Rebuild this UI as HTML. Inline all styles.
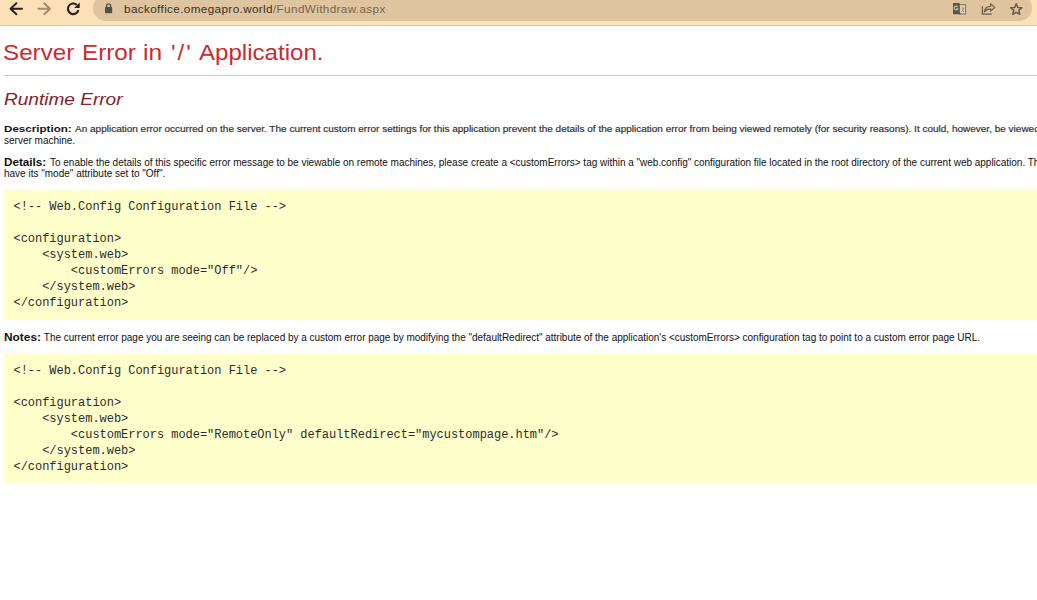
<!DOCTYPE html>
<html><head><meta charset="utf-8">
<style>
html,body{margin:0;padding:0;width:1037px;height:600px;overflow:hidden;background:#fff;}
body{position:relative;font-family:"Liberation Sans",sans-serif;}
.tb{position:absolute;left:0;top:0;width:1037px;height:25px;background:#fce0b8;border-bottom:1px solid #d6c4ad;overflow:hidden;}
.omni{position:absolute;left:93px;top:-5.5px;width:939px;height:26px;border-radius:13px;background:#dfc4a0;}
.url{position:absolute;left:124px;top:2px;font-size:11.7px;letter-spacing:0.38px;color:#76644f;white-space:nowrap;}
.url b{font-weight:normal;color:#3a2f24;}
.ic{position:absolute;}
.l{position:absolute;white-space:nowrap;}
h1{position:absolute;margin:0;left:0;top:39.5px;width:400px;height:30px;font-weight:normal;font-size:22px;color:#cb2a30;white-space:nowrap;}
h1 span{position:absolute;top:0;transform-origin:0 0;}
.hr{position:absolute;left:4px;top:75px;width:1033px;height:1px;background:#c8c8c8;}
h2{position:absolute;margin:0;left:4px;top:91px;font-weight:normal;font-style:italic;font-size:16px;color:#84202a;white-space:nowrap;transform:scaleX(1.19);transform-origin:0 0;}
.t{position:absolute;left:4px;font-size:10px;color:#111;white-space:nowrap;}
.lb{font-weight:bold;transform:scaleX(1.14);transform-origin:0 0;color:#111;}
.d1{-webkit-text-stroke:0.2px #3a3a3a;color:#2a2a2a;}
.dsc{transform:scaleY(0.85);transform-origin:0 9px;}
.box{position:absolute;left:4px;width:1033px;height:131px;background:#ffffcc;}
pre{position:absolute;left:9.5px;top:10px;margin:0;font-family:"Liberation Mono",monospace;font-size:12px;line-height:16px;letter-spacing:-0.03px;color:#2c2c2c;}
</style></head><body>
<div class="tb">
  <div class="omni"></div>
  <svg class="ic" style="left:0;top:0" width="1037" height="25" viewBox="0 0 1037 25">
    <g fill="none" stroke-linecap="round" stroke-linejoin="round">
      <path d="M22 8.7H10.5M16.4 3.2L10.5 8.7L16.4 14.3" stroke="#2a1f14" stroke-width="1.9"/>
      <path d="M38.5 8.7H50M44.3 3.2L50 8.7L44.3 14.3" stroke="#a58a6c" stroke-width="1.9"/>
      <path d="M78.4 10A5.3 5.3 0 1 1 76.8 4.9" stroke="#2a1f14" stroke-width="2.1" stroke-linecap="butt"/>
    </g>
    <path d="M74.2 7.9H79.7V2.4Z" fill="#2a1f14"/>
    <!-- lock -->
    <rect x="105" y="7" width="7.2" height="6.2" rx="0.8" fill="#55504c"/>
    <path d="M106.6 7.6V5.9A2 2 0 0 1 110.6 5.9V7.6" fill="none" stroke="#55504c" stroke-width="1.4"/>
    <!-- translate -->
    <rect x="959.3" y="4.7" width="6.3" height="9.3" fill="#e4cfb3" stroke="#86735e" stroke-width="1"/>
    <path d="M953 3H959.6V12.6L961.2 14.3H953Z" fill="#5a564c"/>
    <path d="M957.6 6.9A1.9 1.9 0 1 0 957.8 8.9H956.3" fill="none" stroke="#cfc4b2" stroke-width="1.1"/>
    <path d="M961.5 8.2H964.1M963.6 8.2Q962.8 10.8 961.2 12M962.2 10L964.1 12" fill="none" stroke="#8f7a64" stroke-width="0.8"/>
    <!-- share -->
    <path d="M982.4 6.2V14.2H991.8" fill="none" stroke="#6e5c48" stroke-width="1.3"/>
    <path d="M984.4 11.8C984.8 8.4 987.2 6.4 990.6 6.3V3.8L994.8 7.4L990.6 11V8.8C987.8 8.8 985.9 9.8 984.4 11.8Z" fill="none" stroke="#6e5c48" stroke-width="1.2" stroke-linejoin="round"/>
    <!-- star -->
    <path d="M1016.30 3.70L1017.89 7.42L1021.91 7.78L1018.87 10.43L1019.77 14.37L1016.30 12.30L1012.83 14.37L1013.73 10.43L1010.69 7.78L1014.71 7.42Z" fill="none" stroke="#6a5a46" stroke-width="1.5" stroke-linejoin="round"/>
  </svg>
  <div class="url"><b>backoffice.omegapro.world</b>/FundWithdraw.aspx</div>
</div>
<h1><span style="left:3px;transform:scaleX(1.10)">Server</span><span style="left:82px;transform:scaleX(1.10)">Error</span><span style="left:143.4px;transform:scaleX(1.113)">in</span><span style="left:170.9px;transform:scaleX(1.1);letter-spacing:1.75px">'/'</span><span style="left:199.4px;transform:scaleX(1.095)">Application.</span></h1>
<div class="hr"></div>
<h2>Runtime Error</h2>
<div class="t lb" style="top:123px;transform:scale(1.16,0.85);transform-origin:0 9px">Description:</div>
<div class="t d1 dsc" style="top:123px;left:75px">An application error occurred on the server. The current custom error settings for this application prevent the details of the application error from being viewed remotely (for security reasons). It could, however, be viewed by browsers running on the local</div>
<div class="t" style="top:135px">server machine.</div>
<div class="t lb" style="top:157px;transform:scaleX(1.17)">Details:</div>
<div class="t" style="top:157px;left:50px;letter-spacing:-0.016px">To enable the details of this specific error message to be viewable on remote machines, please create a &lt;customErrors&gt; tag within a "web.config" configuration file located in the root directory of the current web application. This &lt;customErrors&gt; tag should then</div>
<div class="t" style="top:168px">have its "mode" attribute set to "Off".</div>
<div class="box" style="top:189px"><pre>&lt;!-- Web.Config Configuration File --&gt;

&lt;configuration&gt;
    &lt;system.web&gt;
        &lt;customErrors mode="Off"/&gt;
    &lt;/system.web&gt;
&lt;/configuration&gt;</pre></div>
<div class="t lb" style="top:332px;transform:scaleX(1.19)">Notes:</div>
<div class="t" style="top:332px;left:43.8px;letter-spacing:-0.018px">The current error page you are seeing can be replaced by a custom error page by modifying the "defaultRedirect" attribute of the application's &lt;customErrors&gt; configuration tag to point to a custom error page URL.</div>
<div class="box" style="top:353px"><pre>&lt;!-- Web.Config Configuration File --&gt;

&lt;configuration&gt;
    &lt;system.web&gt;
        &lt;customErrors mode="RemoteOnly" defaultRedirect="mycustompage.htm"/&gt;
    &lt;/system.web&gt;
&lt;/configuration&gt;</pre></div>
</body></html>
